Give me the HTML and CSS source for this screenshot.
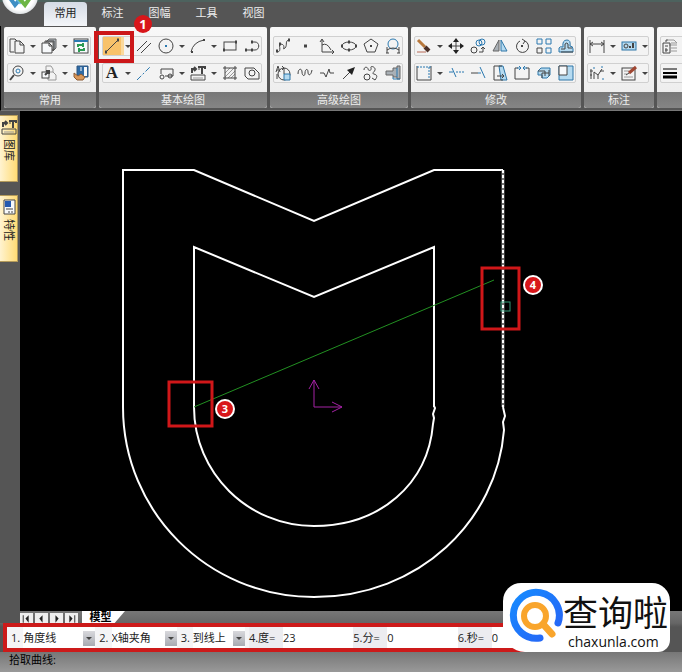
FILE: index.html
```html
<!DOCTYPE html>
<html lang="zh-CN">
<head>
<meta charset="utf-8">
<meta name="viewport" content="width=device-width, initial-scale=1">
<title>CAD 绘图</title>
<link rel="stylesheet" href="styles.css">
</head>
<body>
<header class="menubar">
  <div class="app-logo">
    <svg viewBox="0 0 36 36" aria-hidden="true"><path d="M6 17L13 27L19 20" fill="none" stroke="#3f8fc4" stroke-width="4"/><path d="M12 18L18 25L23 19" fill="none" stroke="#62b8d8" stroke-width="2"/><path d="M17 20L23 27L30 17" fill="none" stroke="#6db644" stroke-width="4"/></svg>
  </div>
  <nav class="tabs">
    <button class="tab active">常用</button>
    <button class="tab">标注</button>
    <button class="tab">图幅</button>
    <button class="tab">工具</button>
    <button class="tab">视图</button>
  </nav>
</header>

<section class="ribbon">
  <div class="group">
    <div class="rows">
      <div class="row">
        <button class="tool" aria-label="复制"><svg viewBox="0 0 16 16"><path d="M5 14H1V1H6L8 3M6 3H11L15 7V15H6ZM11 3V7H15"/></svg></button>
        <button class="more" aria-label="更多"></button>
        <button class="tool" aria-label="粘贴"><svg viewBox="0 0 16 16"><path class="gf" d="M5 4L8 1H15V10L12 13V4Z"/><path class="l" d="M1 5H8V8H11V15H1Z"/><path d="M4 5V3H13V12H11M8 5L11 8"/></svg></button>
        <button class="more" aria-label="更多"></button>
        <button class="tool" aria-label="刷新"><svg viewBox="0 0 16 16"><rect class="l" x="1" y="1" width="14" height="14"/><path class="bl w2" d="M1 3H15"/><path class="gr w2" d="M5 9V7H11M10 5V9M11 10V12H5M6 10V14"/></svg></button>
      </div>
      <div class="row">
        <button class="tool" aria-label="缩放"><svg viewBox="0 0 16 16"><circle cx="9" cy="6" r="5"/><circle class="bl" cx="9" cy="6" r="2"/><path class="w2" d="M5 10L1 15"/></svg></button>
        <button class="more" aria-label="更多"></button>
        <button class="tool" aria-label="图块"><svg viewBox="0 0 16 16"><path class="g" d="M5 7V1H10L12 4V7M7 7H12L15 10V15H7Z"/><rect class="l" x="1" y="7" width="7" height="6"/><path class="w2" d="M4 10L8 6M5 6H8V9"/></svg></button>
        <button class="more" aria-label="更多"></button>
        <button class="tool" aria-label="属性"><svg viewBox="0 0 16 16"><path class="nv" d="M4 1H15V12H4Z"/><path class="wh" d="M7 3H9M7 5H9"/><path class="l" stroke="none" d="M11 2H14V11H11Z"/><path fill="#d99759" stroke="#8a5a35" d="M1 8L5 11L8 9L12 12L10 15H4L1 12Z"/></svg></button>
      </div>
    </div>
    <h2 class="group-title">常用</h2>
  </div>

  <div class="group">
    <div class="rows">
      <div class="row">
        <div class="marked">
          <button class="tool selected" aria-label="直线"><svg viewBox="0 0 16 16"><path d="M2 14L14 2"/><path class="w3" d="M1 14H3M13 2H15"/></svg></button>
          <span class="mark-box"></span><span class="badge">1</span>
        </div>
        <button class="more" aria-label="更多"></button>
        <button class="tool" aria-label="平行线"><svg viewBox="0 0 16 16"><path d="M1 13L11 3M5 15L15 5"/></svg></button>
        <button class="tool" aria-label="圆"><svg viewBox="0 0 16 16"><circle cx="8" cy="8" r="7"/><path class="bl w2" d="M7 8H9"/></svg></button>
        <button class="more" aria-label="更多"></button>
        <button class="tool" aria-label="圆弧"><svg viewBox="0 0 16 16"><path d="M1 14Q3 4 14 2"/><path class="w2" d="M1 14H3M13 2H15"/></svg></button>
        <button class="more" aria-label="更多"></button>
        <button class="tool" aria-label="矩形"><svg viewBox="0 0 16 16"><rect x="2" y="4" width="12" height="8"/><path class="w3" d="M1 12H3M13 4H15"/></svg></button>
        <button class="tool" aria-label="多段线"><svg viewBox="0 0 16 16"><path d="M2 12H11C16 12 16 4 11 4H7"/><path class="w3" d="M1 12H3M7 12H9M7 4H9"/></svg></button>
      </div>
      <div class="row">
        <button class="tool" aria-label="文字"><b class="letter">A</b></button>
        <button class="more" aria-label="更多"></button>
        <button class="tool" aria-label="中心线"><svg viewBox="0 0 16 16"><path class="bl" stroke-dasharray="6 2 2 2" d="M1 15L15 1"/></svg></button>
        <button class="tool" aria-label="轮廓"><svg viewBox="0 0 16 16"><path d="M3 9V4H15V11H7"/><circle cx="4" cy="12" r="2"/><circle cx="12" cy="11" r="2"/></svg></button>
        <button class="more" aria-label="更多"></button>
        <button class="tool" aria-label="图库"><svg viewBox="0 0 16 16"><path class="w2" d="M2 8V4H6M4 2L6 4L4 6M8 2H15V4M12 2V9"/><path d="M9 2V5M1 10H15V15H1Z"/><path class="g" d="M3 13H13"/></svg></button>
        <button class="more" aria-label="更多"></button>
        <button class="tool" aria-label="剖面线"><svg viewBox="0 0 16 16"><path class="g" d="M3 8L8 3M3 12L12 3M6 13L13 6M9 13L13 9"/><path d="M3 1V15M13 1V15M1 3H15M1 13H15"/></svg></button>
        <button class="tool" aria-label="填充"><svg viewBox="0 0 16 16"><path d="M1 3H10L15 8V14H4L1 11Z"/><circle cx="8" cy="8" r="3"/></svg></button>
      </div>
    </div>
    <h2 class="group-title">基本绘图</h2>
  </div>

  <div class="group">
    <div class="rows">
      <div class="row">
        <button class="tool" aria-label="样条"><svg viewBox="0 0 16 16"><path d="M2 14C8 14 2 5 6 6C12 7 6 13 10 10C13 7 9 2 15 2"/><path class="w3" d="M1 13H3M4 6H6M13 2H15"/></svg></button>
        <button class="tool" aria-label="点"><svg viewBox="0 0 16 16"><path class="w3" d="M7 8H10"/></svg></button>
        <button class="tool" aria-label="公式曲线"><svg viewBox="0 0 16 16"><path d="M3 2V14H15M1 4L3 1L5 4M13 12L15 14L13 16M3 7Q8 4 12 12"/></svg></button>
        <button class="tool" aria-label="椭圆"><svg viewBox="0 0 16 16"><ellipse cx="8" cy="8" rx="7" ry="4"/><path class="w3" d="M7 4H9M7 12H9M0 8H2M14 8H16"/></svg></button>
        <button class="tool" aria-label="多边形"><svg viewBox="0 0 16 16"><path d="M8 1L15 6L12 14H4L1 6Z"/><path class="w2" d="M7 8H9"/></svg></button>
        <button class="tool" aria-label="圆弧拟合"><svg viewBox="0 0 16 16"><circle class="bl" cx="8" cy="6" r="5"/><path d="M2 15V9M14 15V9M2 12Q8 8 14 12M1 15H4M12 15H15"/></svg></button>
      </div>
      <div class="row">
        <button class="tool" aria-label="局部放大"><svg viewBox="0 0 16 16"><circle cx="9" cy="9" r="6"/><path class="bf" d="M9 9H15V15H9Z"/><path d="M1 7L3 1L5 7M2 5H4M9 3V9M7 1L9 3L7 5M2 9V14"/></svg></button>
        <button class="tool" aria-label="波浪线"><svg viewBox="0 0 16 16"><path d="M1 9C1 3 5 3 5 7S8 12 8 8S11 3 11 7S14 11 15 5"/></svg></button>
        <button class="tool" aria-label="折断线"><svg viewBox="0 0 16 16"><path d="M1 8H5L7 12L10 4L11 8H15"/></svg></button>
        <button class="tool" aria-label="箭头"><svg viewBox="0 0 16 16"><path d="M2 14L9 7"/><path class="k" d="M14 2L11 10L6 5Z"/></svg></button>
        <button class="tool" aria-label="齿形"><svg viewBox="0 0 16 16"><circle cx="4" cy="12" r="3"/><path d="M1 5C1 1 5 2 5 4S9 6 8 3S13 2 12 5S8 8 11 9S15 11 12 15L9 13"/></svg></button>
        <button class="tool" aria-label="孔轴"><svg viewBox="0 0 16 16"><path class="gf" d="M1 6H8V3H12V1H15V14H12V12H8V10H1Z"/><path class="bl" d="M8 12V14H15M12 3V12"/></svg></button>
      </div>
    </div>
    <h2 class="group-title">高级绘图</h2>
  </div>

  <div class="group">
    <div class="rows">
      <div class="row">
        <button class="tool" aria-label="删除"><svg viewBox="0 0 16 16"><path class="wood" d="M2 2L9 9"/><path class="tip" d="M9 9L13 13"/><path class="red" d="M1 14H10"/></svg></button>
        <button class="more" aria-label="更多"></button>
        <button class="tool" aria-label="平移"><svg viewBox="0 0 16 16"><path d="M8 1V15M1 8H15"/><path class="k" d="M8 0L11 4H5ZM8 16L11 12H5ZM0 8L4 5V11ZM16 8L12 5V11Z"/></svg></button>
        <button class="tool" aria-label="平移复制"><svg viewBox="0 0 16 16"><circle cx="4" cy="12" r="3"/><circle class="bl" cx="9" cy="5" r="3"/><circle class="bl" cx="12" cy="4" r="3"/><path d="M9 14H13V10M11 11L13 9L15 11"/></svg></button>
        <button class="tool" aria-label="镜像"><svg viewBox="0 0 16 16"><path class="gf" d="M7 2V13H1Z"/><path class="bf" d="M9 2V13H15Z"/></svg></button>
        <button class="tool" aria-label="旋转"><svg viewBox="0 0 16 16"><path d="M6 3A6 6 0 1 0 11 3M8 1L11 3L9 6"/><path class="w2" d="M7 8H9"/></svg></button>
        <button class="tool" aria-label="阵列"><svg viewBox="0 0 16 16"><path class="bl" d="M1 1H6V6H1ZM10 1H15V6H10ZM10 10H15V15H10Z"/><path d="M1 10H6V15H1Z"/></svg></button>
        <button class="tool" aria-label="等距"><svg viewBox="0 0 16 16"><path class="bf" d="M1 14V10Q2 8 5 9Q4 2 9 2Q13 2 12 8Q15 8 15 11V14Z"/><path d="M3 11H7V6Q9 4 10 6V10H14M3 14H15"/></svg></button>
      </div>
      <div class="row">
        <button class="tool" aria-label="裁剪"><svg viewBox="0 0 16 16"><path d="M1 1V15H15V1"/><path class="bl" stroke-dasharray="2 1" d="M1 2H15M13 2V13"/></svg></button>
        <button class="more" aria-label="更多"></button>
        <button class="tool" aria-label="打断"><svg viewBox="0 0 16 16"><path class="bl" d="M1 7H5M4 3L8 12"/><path class="bl" stroke-dasharray="2 1" d="M8 7H16"/></svg></button>
        <button class="tool" aria-label="延伸"><svg viewBox="0 0 16 16"><path d="M1 8H8"/><path class="bl" d="M8 8H11M10 2L15 13"/></svg></button>
        <button class="tool" aria-label="拉伸"><svg viewBox="0 0 16 16"><path class="bf" d="M7 1H11L15 15H9Z"/><path d="M2 15V1H10M2 15H11M5 11H12M10 9L12 11L10 13"/></svg></button>
        <button class="tool" aria-label="缩放图形"><svg viewBox="0 0 16 16"><path d="M4 3H1V14H15V3H12"/><path class="bl" d="M3 3H7M5 1L7 3L5 5M13 3H9M11 1L9 3L11 5"/></svg></button>
        <button class="tool" aria-label="三维"><svg viewBox="0 0 16 16"><path class="bf" d="M2 6L5 3H14V10L11 13H6V10H2Z"/><path d="M2 6H9V11M6 8H13M6 8V13M13 5V11"/></svg></button>
        <button class="tool" aria-label="比例"><svg viewBox="0 0 16 16"><path class="bf" d="M1 1H15V15H1Z"/><path class="l" d="M1 1H9V10H1Z"/></svg></button>
      </div>
    </div>
    <h2 class="group-title">修改</h2>
  </div>

  <div class="group">
    <div class="rows">
      <div class="row">
        <button class="tool" aria-label="尺寸"><svg viewBox="0 0 16 16"><path d="M1 2V15M15 2V15M1 6H15M4 4L1 6L4 8M12 4L15 6L12 8"/></svg></button>
        <button class="more" aria-label="更多"></button>
        <button class="tool" aria-label="公差"><svg viewBox="0 0 16 16"><rect class="bf" x="1" y="4" width="14" height="8"/><circle cx="5" cy="8" r="2"/><path class="w2" d="M8 9H10M12 5V10"/></svg></button>
        <button class="more" aria-label="更多"></button>
      </div>
      <div class="row">
        <button class="tool" aria-label="坐标"><svg viewBox="0 0 16 16"><path d="M2 4V14M1 6H4M1 10H3M5 14V7L9 10L13 4M9 10V14M11 6H15"/><path class="bl" d="M5 2V4M13 1V3M13 14H15"/></svg></button>
        <button class="more" aria-label="更多"></button>
        <button class="tool" aria-label="编辑"><svg viewBox="0 0 16 16"><rect x="1" y="3" width="13" height="12"/><path class="g" d="M3 6H8M3 9H6M3 12H12"/><path class="pen" d="M15 2L8 8"/><path d="M8 8L5 10"/></svg></button>
        <button class="more" aria-label="更多"></button>
      </div>
    </div>
    <h2 class="group-title">标注</h2>
  </div>

  <div class="group last">
    <div class="rows">
      <div class="row">
        <button class="tool" aria-label="图层"><svg viewBox="0 0 16 16"><path class="g" d="M6 2H12L15 5H9M7 7H15M9 10H15M9 13H15"/><path d="M4 4V2H6M1 5H8V15H1ZM3 8H6M3 12H6M4 10V14"/></svg></button>
      </div>
      <div class="row">
        <button class="tool" aria-label="线宽"><svg viewBox="0 0 16 16"><path class="ink" d="M1 4H15"/><path class="ink w2" d="M1 8H15"/><path class="ink w3" d="M1 12H15"/></svg></button>
      </div>
    </div>
    <h2 class="group-title"></h2>
  </div>
</section>

<main class="workspace">
  <aside class="palettes">
    <button class="palette"><svg viewBox="0 0 16 16" aria-hidden="true"><path class="w2" d="M2 8V4H6M4 2L6 4L4 6M8 2H15V4M12 2V9"/><path d="M9 2V5M1 10H15V15H1Z"/><path class="g" d="M3 13H13"/></svg><span>图库</span></button>
    <button class="palette"><svg viewBox="0 0 16 16" aria-hidden="true"><path class="l" d="M3 1H14V15H3Z"/><path class="panel" d="M4 2H10V8H4Z"/><path d="M5 10H12M8 12V14M11 12V14"/></svg><span>特性</span></button>
  </aside>
  <svg class="drawing" viewBox="20 111 662 500" role="img" aria-label="模型图形">
    <g class="outline">
      <path d="M503 170H434L314 221L194 170H123V407C123 512 208 597 314 597S497 520 504 430L503 422L505 416L503 407"/>
      <path d="M434 407V247L314 297L194 247V407C194 473 248 526 314 526S428 484 433 424L434 418L433 414L435 408L434 406"/>
    </g>
    <path class="picked-base" d="M503 170V407"/>
    <path class="picked" d="M503 170V407"/>
    <path class="preview" d="M194 407L494 280"/>
    <path class="axis" d="M314 380V407H342M309 389L314 380L319 389M332 402L342 407L332 412"/>
    <rect class="cursor" x="501" y="302" width="9" height="9"/>
    <rect class="frame" x="169" y="382" width="43" height="44"/>
    <rect class="frame" x="482" y="268" width="37" height="61"/>
    <g class="pin"><circle cx="225" cy="409" r="9"/><text x="225" y="413">3</text></g>
    <g class="pin"><circle cx="533" cy="285" r="9"/><text x="533" y="289">4</text></g>
  </svg>
</main>

<footer class="bottom">
  <div class="sheets">
    <button aria-label="第一页"><svg viewBox="0 0 12 10"><path d="M3 2V9"/><path class="k" d="M8 2V9L5 5Z"/></svg></button>
    <button aria-label="上一页"><svg viewBox="0 0 12 10"><path class="k" d="M7 2V9L4 5Z"/></svg></button>
    <button aria-label="下一页"><svg viewBox="0 0 12 10"><path class="k" d="M5 2V9L8 5Z"/></svg></button>
    <button aria-label="最后一页"><svg viewBox="0 0 12 10"><path class="k" d="M4 2V9L7 5Z"/><path d="M9 2V9"/></svg></button>
    <button class="sheet">模型</button>
  </div>
  <form class="options">
    <label class="choice">1.<span class="drop"><select><option>角度线</option></select></span></label>
    <label class="choice">2.<span class="drop"><select><option>X轴夹角</option></select></span></label>
    <label class="choice">3.<span class="drop"><select><option>到线上</option></select></span></label>
    <label class="value"><span>4.度=</span><input type="text" value="23"></label>
    <label class="value"><span>5.分=</span><input type="text" value="0"></label>
    <label class="value"><span>6.秒=</span><input type="text" value="0"></label>
  </form>
  <div class="status">拾取曲线:</div>
  <div class="brand">
    <svg viewBox="0 0 56 58" aria-hidden="true">
      <defs><linearGradient id="ring" x1="0" y1="0" x2="1" y2="1"><stop offset="0" stop-color="#168bff"/><stop offset="1" stop-color="#2862f5"/></linearGradient></defs>
      <path d="M51 35A23 23 0 1 0 33 50" fill="none" stroke="url(#ring)" stroke-width="7" stroke-linecap="round"/>
      <circle cx="28" cy="28" r="11" fill="none" stroke="#f9a52c" stroke-width="6"/>
      <path d="M36 36L45 46" stroke="#f9a52c" stroke-width="7" stroke-linecap="round"/>
    </svg>
    <div class="brand-text"><strong>查询啦</strong><span>chaxunla.com</span></div>
  </div>
</footer>
</body>
</html>
```

FILE: styles.css
```css
* { box-sizing: border-box; }

body {
  margin: 0;
  min-height: 100vh;
  display: flex;
  flex-direction: column;
  overflow: hidden;
  background: #555;
  font: 11px/16px "Open Sans", "Noto Sans CJK SC", sans-serif;
  color: #222;
}

button, input, select {
  margin: 0;
  padding: 0;
  border: 0;
  border-radius: 0;
  background: none;
  font: inherit;
  color: inherit;
}

svg { display: block; }

/* menu bar */
.menubar {
  display: flex;
  height: 26px;
  border-top: 2px solid #4d625e;
  background: #555;
}
.app-logo {
  width: 36px;
  height: 36px;
  margin: -24px 6px 0 2px;
  border-radius: 50%;
  background: radial-gradient(circle, #fff 55%, #d5dadd 75%);
}
.tabs {
  display: flex;
  gap: 4px;
}
.tab {
  width: 43px;
  padding-bottom: 2px;
  color: #eee;
}
.tab.active {
  color: #222;
  border-radius: 4px 4px 0 0;
  background: linear-gradient(#d5dbe5, #f4f6f9);
}

/* ribbon */
.ribbon {
  display: flex;
  gap: 3px;
  height: 85px;
  margin-right: -20px;
  padding: 1px 0 2px 3px;
  border-left: 1px solid #000;
  border-bottom: 1px solid #777;
}
.group {
  flex: none;
  display: flex;
  flex-direction: column;
  border-radius: 2px;
  background: linear-gradient(#f8f8f8, #ebebeb);
}
.group.last { flex: 1; }
.rows {
  flex: 1;
  display: flex;
  flex-direction: column;
  gap: 7px;
  padding: 9px 5px 0 3px;
}
.row {
  display: flex;
  align-items: center;
  gap: 6px;
  height: 20px;
  padding: 0 1px;
  border: 1px solid #d0d0d0;
  border-radius: 2px;
  background: #f3f3f3;
}
.group-title {
  height: 16px;
  margin: 0;
  border-radius: 0 0 3px 3px;
  background: linear-gradient(#777, #858585);
  color: #eee;
  font-size: 11px;
  font-weight: 400;
  text-align: center;
}
.tool {
  width: 16px;
  height: 16px;
}
.more {
  width: 6px;
  height: 16px;
  margin: 0 -1px;
}
.more::before {
  content: "";
  display: block;
  border: 3px solid transparent;
  border-top-color: #444;
  border-bottom: 0;
}
.letter {
  display: block;
  font: bold 17px/16px "Liberation Serif", serif;
}
.tool svg, .palette svg {
  width: 16px;
  height: 16px;
  overflow: visible;
}
.tool svg, .palette svg, .sheets svg {
  fill: none;
  stroke: #444;
}
.g { stroke: #999; }
.bl { stroke: #2b79b0; }
.gr { stroke: #2c9a52; }
.wh { stroke: #fff; }
.red { stroke: #b86a56; }
.ink { stroke: #000; }
.wood { stroke: #b8783c; stroke-width: 3px; }
.tip { stroke: #4b3028; stroke-width: 4px; }
.pen { stroke: #9f4632; stroke-width: 3px; }
.l { fill: #f7f9fb; }
.bf { fill: #b5daf0; stroke: #2f77a8; }
.nv { fill: #2e6aa5; stroke: #2e5680; }
.gf { fill: #a9b0b6; stroke: #666; }
.k { fill: #222; stroke: none; }
.panel { fill: #2459b0; stroke: none; }
.w2 { stroke-width: 2px; }
.w3 { stroke-width: 3px; }
.marked {
  position: relative;
  height: 16px;
}
.selected {
  background: #f8c26a;
  box-shadow: 0 0 0 1px #f8c26a, 3px 0 0 1px #fbd99c;
}
.mark-box {
  position: absolute;
  top: -7px;
  left: -10px;
  width: 40px;
  height: 32px;
  border: 4px solid #cc1719;
}
.badge {
  position: absolute;
  z-index: 1;
  top: -23px;
  left: 30px;
  width: 18px;
  height: 18px;
  border-radius: 50%;
  background: #d8161a;
  color: #fff;
  font: bold 13px/18px "Open Sans", sans-serif;
  text-align: center;
}

/* workspace */
.workspace {
  flex: 1;
  display: flex;
  min-height: 0;
}
.palettes {
  width: 20px;
  display: flex;
  flex-direction: column;
  gap: 13px;
  padding: 4px 2px 0 0;
}
.palette {
  display: flex;
  flex-direction: column;
  align-items: center;
  gap: 4px;
  height: 67px;
  padding: 3px 0;
  border: 1px solid #b39a5a;
  border-left: 0;
  background: linear-gradient(90deg, #fff3d0, #ffdb75);
}
.palette span {
  writing-mode: vertical-rl;
  text-orientation: sideways;
}
.drawing {
  flex: 1;
  min-width: 0;
  background: #000;
  fill: none;
}
.outline { stroke: #fff; stroke-width: 2px; }
.picked-base { stroke: #777; stroke-width: 3px; }
.picked { stroke: #fff; stroke-width: 2px; stroke-dasharray: 3 2; }
.preview { stroke: #229022; }
.axis { stroke: #a422a4; }
.cursor { stroke: #339977; }
.frame { stroke: #d01719; stroke-width: 3px; }
.pin circle { fill: #d8161a; stroke: #fff; stroke-width: 2px; }
.pin text {
  fill: #fff;
  font: bold 11px "Open Sans", sans-serif;
  text-anchor: middle;
}

/* bottom bars */
.bottom {
  position: relative;
  background: linear-gradient(#777, #666 12px, #555 16px);
}
.sheets {
  display: flex;
  gap: 2px;
  height: 12px;
  padding: 2px 0 0 20px;
  background: linear-gradient(90deg, #555 20px, transparent 20px);
}
.sheets button {
  width: 13px;
  background: #eee;
}
.sheets .sheet {
  width: 43px;
  height: 12px;
  margin: -2px 0 0 2px;
  padding-right: 6px;
  background: #fff;
  clip-path: polygon(0 0, 100% 0, 76% 100%, 0 100%);
  color: #000;
  font-weight: 700;
  line-height: 12px;
}
.options {
  display: grid;
  grid-template-columns: minmax(0, 88fr) minmax(0, 81fr) minmax(0, 68fr) repeat(3, minmax(0, 104fr));
  margin: 0 17% 0 3px;
  padding-left: 4px;
  border: 4px solid #cc1a1a;
  background: #f4f4f6;
  line-height: 21px;
}
.choice, .value { display: flex; }
.choice { padding-right: 4px; gap: 3px; }
.drop {
  position: relative;
  flex: 1;
  display: flex;
  min-width: 0;
  background: #fff;
}
.drop select {
  appearance: none;
  flex: 1;
  min-width: 0;
  height: 21px;
}
.drop::before {
  content: "";
  position: absolute;
  inset: 4px 0 2px auto;
  width: 12px;
  background: linear-gradient(#d8d8dc, #a8abb2);
  pointer-events: none;
}
.drop::after {
  content: "";
  position: absolute;
  top: 10px;
  right: 3px;
  border: 3px solid transparent;
  border-top-color: #444;
  border-bottom: 0;
  pointer-events: none;
}
.value span {
  width: 34px;
  background: #ececf0;
}
.value input {
  flex: 1;
  min-width: 0;
  background: #fff;
}
.status {
  height: 20px;
  padding-left: 9px;
  background: linear-gradient(#777, #999);
  color: #000;
}
.brand {
  position: absolute;
  right: 12px;
  bottom: 20px;
  width: 167px;
  height: 69px;
  display: flex;
  padding: 5px 0 0 4px;
  border-radius: 18px 18px 12px 22px;
  background: #fff;
  color: #111;
}
.brand svg {
  flex: none;
  width: 56px;
  height: 58px;
}
.brand-text {
  display: flex;
  flex-direction: column;
  white-space: nowrap;
}
.brand-text strong {
  font: 400 35px/46px "Noto Sans CJK SC", sans-serif;
}
.brand-text span {
  padding-left: 5px;
  font-size: 14px;
  font-weight: 500;
}
```
